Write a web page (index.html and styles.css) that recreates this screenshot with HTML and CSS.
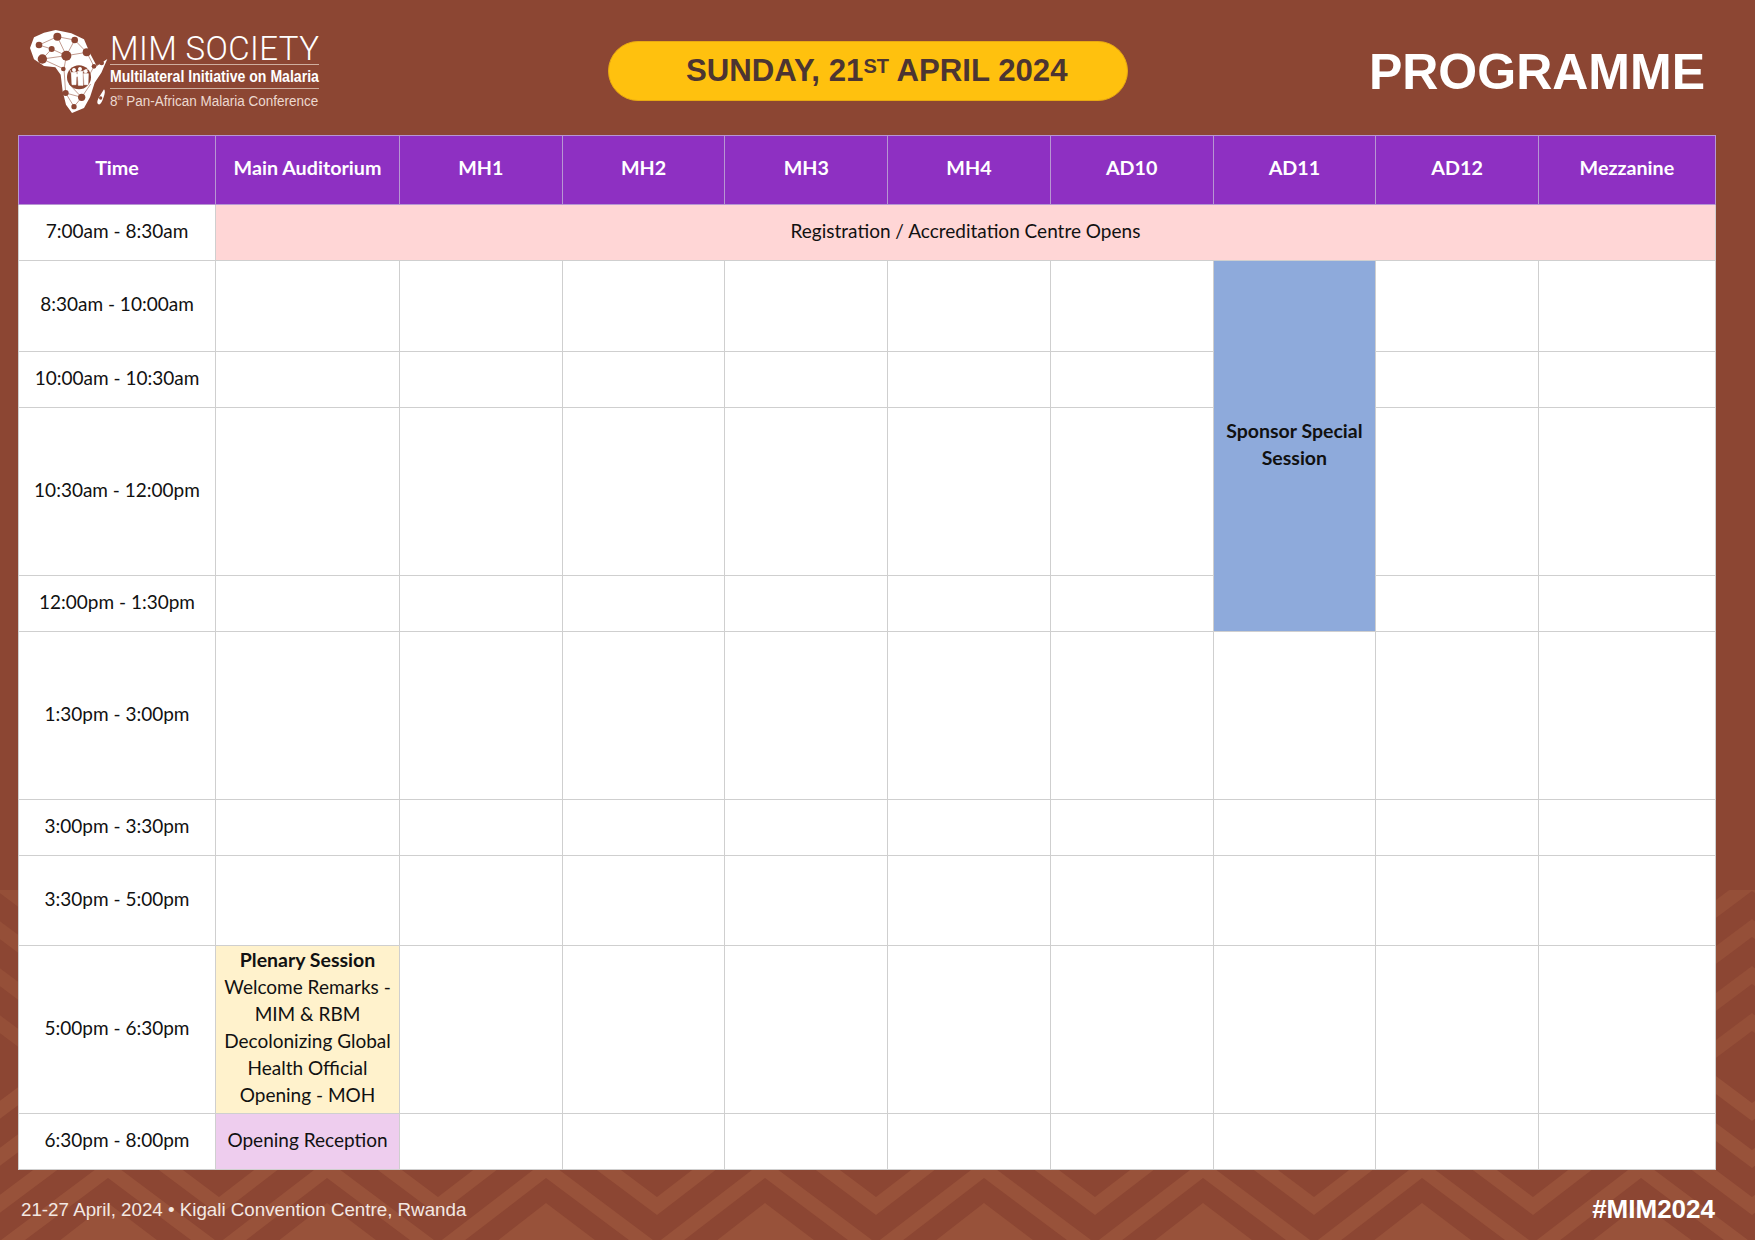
FILE: index.html
```html
<!DOCTYPE html>
<html lang="en">

<head>
  <meta charset="UTF-8">
  <title>MIM Society - Programme</title>
  <link rel="stylesheet" href="styles.css">
</head>

<body>

  <!-- chevrons behind the lower part of the page -->
  <svg class="chevrons" viewBox="0 0 1755 350" width="1755" height="350">
    <defs>
      <polygon id="zig"
        points="-111,83 0,0 111,83 219,0 330,83 438,0 549,83 657,0 768,83 876,0 987,83 1095,0 1206,83 1314,0 1425,83 1533,0 1644,83 1752,0 1863,83 1863,101 1752,18 1644,101 1533,18 1425,101 1314,18 1206,101 1095,18 987,101 876,18 768,101 657,18 549,101 438,18 330,101 219,18 111,101 0,18 -111,101" />
      <g id="zigs">
        <use href="#zig" x="108" y="130" />
        <use href="#zig" x="108" y="177" />
        <use href="#zig" x="108" y="224" />
        <use href="#zig" x="108" y="270" />
      </g>
      <clipPath id="lowerHalf">
        <rect x="0" y="177" width="1755" height="173" />
      </clipPath>
      <clipPath id="upperHalf">
        <rect x="0" y="0" width="1755" height="177" />
      </clipPath>
    </defs>
    <g class="band" clip-path="url(#lowerHalf)">
      <use href="#zigs" />
      <polygon points="0,397 108,313 219,397 327,313 438,397 546,313 657,397 765,313 876,397 984,313 1095,397 1203,313 1314,397 1422,313 1533,397 1641,313 1755,397" />
    </g>
    <g class="band band-faint" clip-path="url(#upperHalf)">
      <use href="#zigs" transform="translate(0 354) scale(1 -1)" />
    </g>
  </svg>

  <div class="page">
    <header class="top-bar">
      <div class="logo">
        <svg class="logo-map" viewBox="85 85 240 255" width="80" height="85">
          <path class="map-land"
            d="M165 88 L212 98 L250 116 L268 158 L288 196 L320 175 L302 216 L282 246 L268 290 L250 322 L214 337 L196 312 L186 272 L180 222 L164 200 L130 196 L100 176 L88 142 L100 110 L130 96 Z" />
          <path class="map-lines"
            d="M170 108 L222 118 L258 155 L197 165 L153 145 L115 133 L170 108 L197 165 L125 175 L153 145 M222 118 L197 165 M125 175 L190 205 L197 165 M258 155 L280 197 L303 187 M190 205 L195 277 L220 318 L243 290 L195 277 M243 290 L270 250 M280 197 L265 225 M205 250 L243 290" />
          <g class="map-nodes">
            <circle cx="170" cy="108" r="12" />
            <circle cx="222" cy="118" r="10" />
            <circle cx="115" cy="133" r="10" />
            <circle cx="153" cy="145" r="9" />
            <circle cx="197" cy="165" r="15" />
            <circle cx="258" cy="155" r="12" />
            <circle cx="125" cy="175" r="14" />
            <circle cx="188" cy="205" r="7" />
            <circle cx="280" cy="197" r="7" />
            <circle cx="303" cy="187" r="7" />
            <circle cx="235" cy="230" r="36" />
            <circle cx="195" cy="277" r="9" />
            <circle cx="243" cy="290" r="11" />
            <circle cx="220" cy="318" r="8" />
          </g>
          <g class="map-people">
            <circle cx="220" cy="208" r="5" />
            <circle cx="238" cy="205" r="5" />
            <circle cx="255" cy="212" r="5" />
            <circle cx="228" cy="224" r="4" />
            <path d="M212 216 L227 214 L226 252 L214 252 Z" />
            <path d="M231 212 L246 212 L247 254 L233 254 Z" />
            <path d="M249 219 L263 219 L262 252 L251 252 Z" />
            <path d="M208 208 L212 218 M246 212 L264 204" />
          </g>
          <path class="map-land" d="M310 266 Q316 272 308 292 Q300 316 292 310 Q286 304 296 288 Z" />
          <circle class="map-dot" cx="300" cy="292" r="5" />
        </svg>
        <div class="logo-text">
          <div class="logo-name">MIM SOCIETY</div>
          <div class="logo-full"><span>Multilateral Initiative on Malaria</span></div>
          <div class="logo-conf"><span>8<sup>th</sup> Pan-African Malaria Conference</span></div>
        </div>
      </div>
      <div class="date-pill">SUNDAY, 21<sup>ST</sup> APRIL 2024</div>
      <h1 class="page-title">PROGRAMME</h1>
    </header>

    <table class="schedule">
      <colgroup>
        <col class="col-time">
        <col class="col-main">
        <col class="col-room">
        <col class="col-room">
        <col class="col-room">
        <col class="col-room">
        <col class="col-room">
        <col class="col-room">
        <col class="col-room">
        <col class="col-mezz">
      </colgroup>
      <thead>
        <tr>
          <th>Time</th>
          <th>Main Auditorium</th>
          <th>MH1</th>
          <th>MH2</th>
          <th>MH3</th>
          <th>MH4</th>
          <th>AD10</th>
          <th>AD11</th>
          <th>AD12</th>
          <th>Mezzanine</th>
        </tr>
      </thead>
      <tbody>
        <tr class="row-s">
          <td>7:00am - 8:30am</td>
          <td class="registration" colspan="9">Registration / Accreditation Centre Opens</td>
        </tr>
        <tr class="row-m">
          <td>8:30am - 10:00am</td>
          <td></td><td></td><td></td><td></td><td></td><td></td>
          <td class="sponsor" rowspan="4">Sponsor Special Session</td>
          <td></td><td></td>
        </tr>
        <tr class="row-s">
          <td>10:00am - 10:30am</td>
          <td></td><td></td><td></td><td></td><td></td><td></td>
          <td></td><td></td>
        </tr>
        <tr class="row-l">
          <td>10:30am - 12:00pm</td>
          <td></td><td></td><td></td><td></td><td></td><td></td>
          <td></td><td></td>
        </tr>
        <tr class="row-s">
          <td>12:00pm - 1:30pm</td>
          <td></td><td></td><td></td><td></td><td></td><td></td>
          <td></td><td></td>
        </tr>
        <tr class="row-l">
          <td>1:30pm - 3:00pm</td>
          <td></td><td></td><td></td><td></td><td></td><td></td><td></td><td></td><td></td>
        </tr>
        <tr class="row-s">
          <td>3:00pm - 3:30pm</td>
          <td></td><td></td><td></td><td></td><td></td><td></td><td></td><td></td><td></td>
        </tr>
        <tr class="row-m">
          <td>3:30pm - 5:00pm</td>
          <td></td><td></td><td></td><td></td><td></td><td></td><td></td><td></td><td></td>
        </tr>
        <tr class="row-l">
          <td>5:00pm - 6:30pm</td>
          <td class="plenary"><b>Plenary Session</b><br>Welcome Remarks - MIM &amp; RBM<br>Decolonizing Global Health Official<br>Opening - MOH</td>
          <td></td><td></td><td></td><td></td><td></td><td></td><td></td><td></td>
        </tr>
        <tr class="row-s">
          <td>6:30pm - 8:00pm</td>
          <td class="reception">Opening Reception</td>
          <td></td><td></td><td></td><td></td><td></td><td></td><td></td><td></td>
        </tr>
      </tbody>
    </table>

    <footer class="bottom-bar">
      <span>21-27 April, 2024 • Kigali Convention Centre, Rwanda</span>
      <b class="hashtag">#MIM2024</b>
    </footer>
  </div>

</body>

</html>
```

FILE: styles.css
```css
body {
  margin: 0;
  width: 1755px;
  height: 1240px;
  position: relative;
  overflow: hidden;
  background: #8c4633;
  font-family: "Liberation Sans", Arial, sans-serif;
}

/* chevrons sit under everything */
.chevrons {
  position: absolute;
  left: 0;
  top: 890px;
}

.band {
  fill: #98523a;
}

.band-faint {
  opacity: 0.75;
}

.page {
  position: relative;
  height: 1240px;
  box-sizing: border-box;
  padding: 0 40px 0 18px;
  display: flex;
  flex-direction: column;
}

.top-bar {
  height: 135px;
  flex: none;
  display: flex;
  align-items: flex-start;
}

/* logo */
.logo {
  width: 590px;
  flex: none;
  display: flex;
  align-items: flex-start;
  gap: 1px;
  padding: 29px 0 0 11px;
  box-sizing: border-box;
  color: #fff;
}

.map-land {
  fill: #fff;
}

.map-lines {
  fill: none;
  stroke: #a56a57;
  stroke-width: 2;
}

.map-nodes,
.map-dot {
  fill: #8c4633;
}

.map-people {
  fill: #fff;
  stroke: #fff;
  stroke-width: 2;
}

.logo-text {
  width: 209px;
  padding-top: 5px;
}

.logo-name {
  font-family: Roboto, sans-serif;
  font-weight: 300;
  font-size: 33px;
  letter-spacing: 0.4px;
  line-height: 29px;
  height: 30px;
  white-space: nowrap;
  border-bottom: 1px solid #cfae9f;
}

.logo-full {
  font-weight: bold;
  font-size: 16px;
  line-height: 23px;
  white-space: nowrap;
  border-bottom: 1px solid #cfae9f;
}

.logo-conf {
  font-size: 15.5px;
  line-height: 24px;
  white-space: nowrap;
  color: #ecd9d0;
}

/* squeezed to look like the condensed face of the logo */
.logo-full span,
.logo-conf span {
  display: inline-block;
  transform-origin: left center;
}

.logo-full span {
  transform: scaleX(0.88);
}

.logo-conf span {
  transform: scaleX(0.87);
}

.logo-conf sup {
  font-size: 7px;
  line-height: 0;
}

/* date pill */
.date-pill {
  width: 520px;
  height: 60px;
  margin-top: 41px;
  flex: none;
  box-sizing: border-box;
  padding-left: 77px;
  border-radius: 30px;
  background: #ffc10e;
  border: 1px solid #e8a912;
  color: #4c3532;
  font-weight: bold;
  font-size: 31.2px;
  line-height: 58px;
  white-space: nowrap;
}

.date-pill sup {
  font-size: 20px;
  line-height: 0;
  vertical-align: 8px;
}

.page-title {
  margin: 42px 10px 0 auto;
  color: #fff;
  font-size: 50px;
  line-height: 60px;
  font-weight: bold;
}

/* schedule table */
.schedule {
  width: 1697px;
  flex: none;
  table-layout: fixed;
  border-collapse: collapse;
  font-family: Lato, sans-serif;
  font-size: 19px;
  line-height: 27px;
  color: #111;
  background: #fff;
}

.col-time {
  width: 197px;
}

.col-main {
  width: 184px;
}

.col-room {
  width: 162.71px;
}

.col-mezz {
  width: 177px;
}

.schedule th {
  height: 69px;
  padding: 0 0 6px;
  box-sizing: border-box;
  background: #8e30c2;
  color: #fff;
  font-size: 19.7px;
  font-weight: bold;
  border: 1px solid #b796d2;
}

.schedule td {
  padding: 0 4px 4px;
  text-align: center;
  vertical-align: middle;
  border: 1px solid #cfcfcf;
}

.row-s {
  height: 56px;
}

.row-m {
  height: 90.5px;
}

.row-l {
  height: 168px;
}

.schedule .registration {
  background: #ffd6d6;
}

.schedule .sponsor {
  background: #8eaadb;
  font-weight: bold;
  font-size: 19.5px;
}

.schedule .plenary {
  background: #fff2cc;
  padding-bottom: 5px;
}

.plenary b {
  font-size: 19.5px;
}

.schedule .reception {
  background: #eecdee;
}

/* footer */
.bottom-bar {
  flex: 1;
  display: flex;
  justify-content: space-between;
  align-items: center;
  padding: 9px 0 0 3px;
  color: #f3e8e3;
  font-size: 18.75px;
}

.hashtag {
  color: #fff;
  font-size: 26px;
}
```
